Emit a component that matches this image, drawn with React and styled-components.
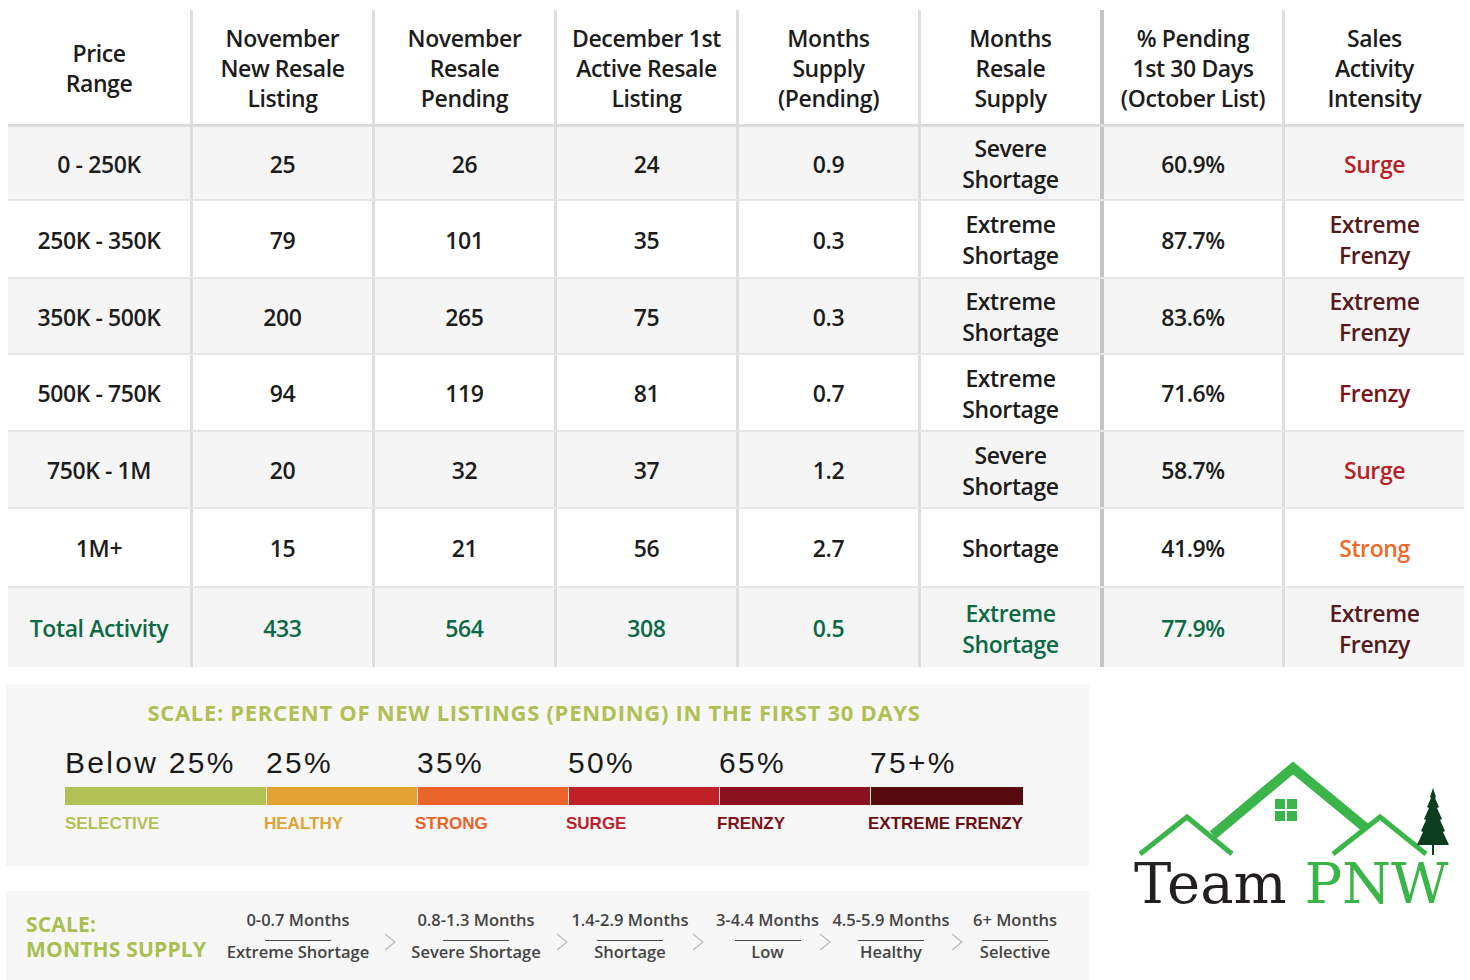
import React from 'react'
import styled, { createGlobalStyle } from 'styled-components'

const GlobalStyle = createGlobalStyle`
  html, body {
    margin: 0;
    padding: 0;
    background: #ffffff;
  }
  body {
    font-family: "Open Sans", "Noto Sans", sans-serif;
    color: #1c1c1c;
  }
`

const headers = [
  ['Price', 'Range'],
  ['November', 'New Resale', 'Listing'],
  ['November', 'Resale', 'Pending'],
  ['December 1st', 'Active Resale', 'Listing'],
  ['Months', 'Supply', '(Pending)'],
  ['Months', 'Resale', 'Supply'],
  ['% Pending', '1st 30 Days', '(October List)'],
  ['Sales', 'Activity', 'Intensity'],
]

const SURGE = '#b51f27'
const XFRENZY = '#561a1d'
const FRENZY = '#7c1319'
const STRONG = '#ec6a2a'
const GREEN = '#0b6a45'

const rows = [
  { h: 72, cells: ['0 - 250K', '25', '26', '24', '0.9', 'Severe\nShortage', '60.9%', 'Surge'], tone: SURGE },
  { h: 76, cells: ['250K - 350K', '79', '101', '35', '0.3', 'Extreme\nShortage', '87.7%', 'Extreme\nFrenzy'], tone: XFRENZY },
  { h: 74, cells: ['350K - 500K', '200', '265', '75', '0.3', 'Extreme\nShortage', '83.6%', 'Extreme\nFrenzy'], tone: XFRENZY },
  { h: 75, cells: ['500K - 750K', '94', '119', '81', '0.7', 'Extreme\nShortage', '71.6%', 'Frenzy'], tone: FRENZY },
  { h: 75, cells: ['750K - 1M', '20', '32', '37', '1.2', 'Severe\nShortage', '58.7%', 'Surge'], tone: SURGE },
  { h: 77, cells: ['1M+', '15', '21', '56', '2.7', 'Shortage', '41.9%', 'Strong'], tone: STRONG },
  { h: 79, cells: ['Total Activity', '433', '564', '308', '0.5', 'Extreme\nShortage', '77.9%', 'Extreme\nFrenzy'], tone: XFRENZY, total: true },
]

const scale = [
  { pct: 'Below 25%', name: 'SELECTIVE', color: '#b2c155', text: '#b2c155' },
  { pct: '25%', name: 'HEALTHY', color: '#e0a334', text: '#e0a334' },
  { pct: '35%', name: 'STRONG', color: '#e9632a', text: '#e9632a' },
  { pct: '50%', name: 'SURGE', color: '#c02026', text: '#bb1f2b' },
  { pct: '65%', name: 'FRENZY', color: '#8a1120', text: '#7f1119' },
  { pct: '75+%', name: 'EXTREME FRENZY', color: '#560a0e', text: '#6a0f14' },
]

const steps = [
  { top: '0-0.7 Months', bottom: 'Extreme Shortage', w: 184, pl: 0 },
  { top: '0.8-1.3 Months', bottom: 'Severe Shortage', w: 172, pl: 0 },
  { top: '1.4-2.9 Months', bottom: 'Shortage', w: 136, pl: 0 },
  { top: '3-4.4 Months', bottom: 'Low', w: 127, pl: 12 },
  { top: '4.5-5.9 Months', bottom: 'Healthy', w: 132, pl: 0 },
  { top: '6+ Months', bottom: 'Selective', w: 116, pl: 0 },
]

const Page = styled.div`
  width: 1470px;
  height: 980px;
  overflow: hidden;
  padding-top: 10px;
  box-sizing: border-box;
`

const Table = styled.div`
  margin-left: 8px;
  width: 1456px;
  display: flex;
  flex-direction: column;
`

const Row = styled.div`
  display: grid;
  grid-template-columns: repeat(8, 182px);
  height: ${({ $h }) => $h}px;
  background: ${({ $shade }) => ($shade ? '#f5f5f5' : '#ffffff')};
  border-top: ${({ $first }) => ($first ? 'none' : '2px solid #e6e6e6')};
`

const HeadRow = styled(Row)`
  height: 114px;
  border-bottom: 3px solid #dcdcdc;
`

const Cell = styled.div`
  display: flex;
  align-items: center;
  justify-content: center;
  text-align: center;
  white-space: pre-line;
  font-size: 23px;
  font-weight: 600;
  letter-spacing: -0.4px;
  line-height: ${({ $lh }) => $lh || 31}px;
  color: ${({ $color }) => $color || '#1c1c1c'};
  border-left: ${({ $i }) =>
    $i === 0 ? 'none' : $i === 6 ? '4px solid #c4c4c4' : '3px solid #dedede'};
  box-sizing: border-box;
  padding-top: 2px;
`

const Bottom = styled.div`
  display: flex;
  margin-top: 17px;
`

const LeftCol = styled.div`
  margin-left: 6px;
  width: 1083px;
  display: flex;
  flex-direction: column;
  gap: 25px;
`

const ScaleBox = styled.div`
  height: 182px;
  background: #f7f7f7;
  padding-top: 14px;
  box-sizing: border-box;
`

const ScaleTitle = styled.div`
  text-align: center;
  padding-right: 27px;
  font-size: 22px;
  line-height: 28px;
  font-weight: 700;
  letter-spacing: 0.7px;
  color: #b0c055;
  white-space: nowrap;
`

const ScaleGrid = styled.div`
  margin-left: 59px;
  margin-top: 19px;
  display: grid;
  grid-template-columns: 201px repeat(4, 151px) 153px;
`

const Pct = styled.div`
  font-family: "Liberation Sans", Arial, sans-serif;
  font-size: 30px;
  line-height: 36px;
  letter-spacing: 2.3px;
  color: #1a1a1a;
  white-space: nowrap;
`

const Segment = styled.div`
  margin-top: 6px;
  height: 18px;
  background: ${({ $color }) => $color};
  border-left: ${({ $first }) => ($first ? 'none' : '1px solid #f3e6e0')};
`

const SegName = styled.div`
  margin-top: 9px;
  margin-left: ${({ $first }) => ($first ? 0 : -2)}px;
  font-family: "Liberation Sans", Arial, sans-serif;
  font-weight: 700;
  font-size: 17px;
  line-height: 20px;
  color: ${({ $color }) => $color};
  white-space: nowrap;
`

const MonthsBox = styled.div`
  height: 89px;
  background: #f7f7f7;
  display: flex;
  align-items: center;
  padding-left: 20px;
  box-sizing: border-box;
`

const MonthsTitle = styled.div`
  width: 180px;
  font-size: 21px;
  line-height: 25px;
  font-weight: 700;
  letter-spacing: 0.2px;
  color: #a9bf50;
  white-space: nowrap;
  padding-top: 2px;
`

const Step = styled.div`
  position: relative;
  width: ${({ $w }) => $w}px;
  padding-left: ${({ $pl }) => $pl}px;
  box-sizing: border-box;
  display: flex;
  flex-direction: column;
  align-items: center;
  font-size: 16.5px;
  font-weight: 600;
  color: #444444;
  white-space: nowrap;
`

const StepTop = styled.div`
  line-height: 22px;
`

const StepRule = styled.div`
  width: 66px;
  height: 1px;
  background: #4a4a4a;
  margin: 9px 0 0;
`

const StepBottom = styled.div`
  line-height: 22px;
`

const Chevron = styled.svg`
  position: absolute;
  left: -6px;
  top: 23px;
`

const LogoBox = styled.div`
  flex: 1;
  padding-top: 68px;
  padding-left: 41px;
  display: flex;
  flex-direction: column;
  align-items: flex-start;
`

const LogoText = styled.div`
  margin-left: 4px;
  font-family: "DejaVu Serif", "Liberation Serif", serif;
  font-size: 56px;
  line-height: 56px;
  color: #231f20;
  white-space: nowrap;
`

const LogoGreen = styled.span`
  color: #3bb54a;
`

const Logo = () => (
  <LogoBox>
    <svg width="330" height="104" viewBox="1130 752 330 104">
      <polyline points="1140,854 1187,817 1232,854" fill="none" stroke="#3bb54a" strokeWidth="5" />
      <polyline points="1333,854 1380,817 1426,854" fill="none" stroke="#3bb54a" strokeWidth="5" />
      <polyline points="1213,835 1293,768 1367,829" fill="none" stroke="#3bb54a" strokeWidth="10" strokeLinejoin="miter" />
      <rect x="1275" y="799" width="10" height="10" fill="#3bb54a" />
      <rect x="1287" y="799" width="10" height="10" fill="#3bb54a" />
      <rect x="1275" y="811" width="10" height="10" fill="#3bb54a" />
      <rect x="1287" y="811" width="10" height="10" fill="#3bb54a" />
      <polygon
        points="1433,788 1430,797 1431,798 1427,807 1429,808 1424,819 1426,820 1421,831 1423,832 1417,845 1449,845 1443,832 1445,831 1440,820 1442,819 1437,808 1439,807 1435,798 1436,797"
        fill="#0b3d1e"
      />
      <rect x="1432" y="844" width="2" height="11" fill="#0b3d1e" />
    </svg>
    <LogoText>
      Team <LogoGreen>PNW</LogoGreen>
    </LogoText>
  </LogoBox>
)

const App = () => {
  return (
    <Page>
      <GlobalStyle />
      <Table>
        <HeadRow $first>
          {headers.map((lines, i) => (
            <Cell key={i} $i={i} $lh={30}>
              {lines.join('\n')}
            </Cell>
          ))}
        </HeadRow>
        {rows.map((row, r) => (
          <Row key={r} $h={row.h} $shade={r % 2 === 0} $first={r === 0}>
            {row.cells.map((text, i) => (
              <Cell
                key={i}
                $i={i}
                $color={i === 7 ? row.tone : row.total ? GREEN : undefined}
              >
                {text}
              </Cell>
            ))}
          </Row>
        ))}
      </Table>
      <Bottom>
        <LeftCol>
          <ScaleBox>
            <ScaleTitle>SCALE: PERCENT OF NEW LISTINGS (PENDING) IN THE FIRST 30 DAYS</ScaleTitle>
            <ScaleGrid>
              {scale.map((s, i) => (
                <div key={i}>
                  <Pct>{s.pct}</Pct>
                  <Segment $color={s.color} $first={i === 0} />
                  <SegName $color={s.text} $first={i === 0}>{s.name}</SegName>
                </div>
              ))}
            </ScaleGrid>
          </ScaleBox>
          <MonthsBox>
            <MonthsTitle>
              SCALE:
              <br />
              MONTHS SUPPLY
            </MonthsTitle>
            {steps.map((s, i) => (
              <Step key={i} $w={s.w} $pl={s.pl}>
                {i > 0 && (
                  <Chevron width="12" height="20" viewBox="0 0 12 20">
                    <polyline points="1,2 11,10 1,18" fill="none" stroke="#b8b8b8" strokeWidth="1.2" />
                  </Chevron>
                )}
                <StepTop>{s.top}</StepTop>
                <StepRule />
                <StepBottom>{s.bottom}</StepBottom>
              </Step>
            ))}
          </MonthsBox>
        </LeftCol>
        <Logo />
      </Bottom>
    </Page>
  )
}

export default App
